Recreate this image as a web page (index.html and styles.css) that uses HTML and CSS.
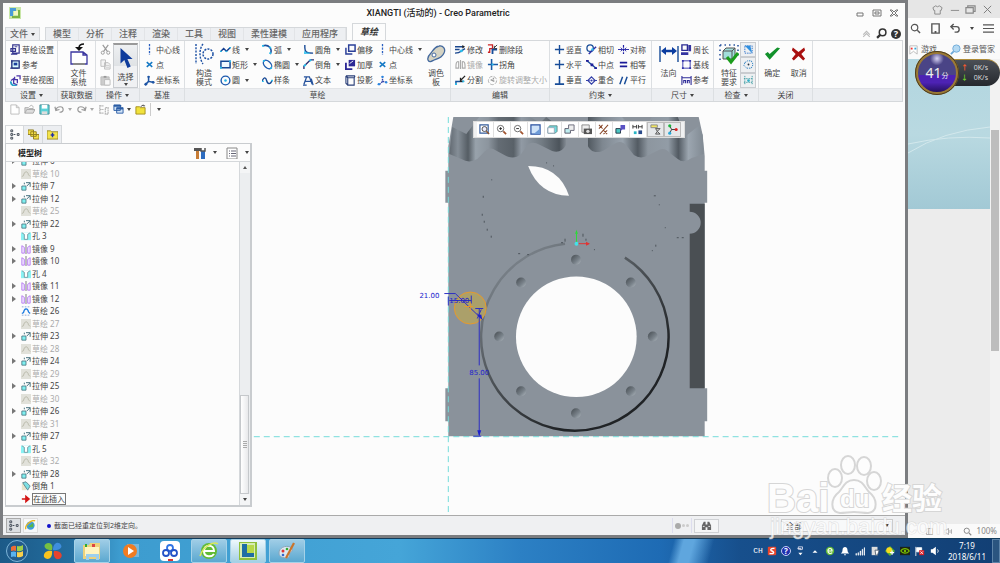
FILE: index.html
```html
<!DOCTYPE html>
<html lang="zh-CN">
<head>
<meta charset="utf-8">
<title>XIANGTI (活动的) - Creo Parametric</title>
<link rel="stylesheet" href="styles.css">
</head>
<body>
<svg class="defs" aria-hidden="true">
  <symbol id="i-setup" viewBox="0 0 12 12"><path d="M3 1h7v9H3zM1 5h5v3H1zM1 11h7" fill="#fff" stroke="#33348e" stroke-width="1.3"/><path d="M5 3h3" stroke="#33348e"/></symbol>
  <symbol id="i-ref" viewBox="0 0 12 12"><path d="M2 2h8v8H2z" fill="#dff" stroke="#22317e" stroke-width="1.5"/><path d="M4 4h4v3H4z" fill="#1c3f9c"/><path d="M0 10h9M2 1v3" stroke="#22317e"/></symbol>
  <symbol id="i-view" viewBox="0 0 12 12"><path d="M7 1h4v4M5 2v3h3v4M1 6l3-2v5l4 2" fill="none" stroke="#4b35a8" stroke-width="1.4"/><path d="M1 7a4 4 0 0 0 6 4" fill="none" stroke="#2aa0c8" stroke-width="2"/></symbol>
  <symbol id="i-file" viewBox="0 0 20 22"><path d="M2 9V21H18V12L14 9zM14 9v3h4" fill="#fff" stroke="#3a36a0" stroke-width="1.3"/><path d="M4 21h12" stroke="#888" stroke-width="2"/><path d="M6 4h8l-4 4z" fill="#111"/><path d="M10 5c0-3 2-4 5-4" fill="none" stroke="#111" stroke-width="1.6"/></symbol>
  <symbol id="i-cut" viewBox="0 0 12 12"><path d="M3 1l5 7M9 1L4 8" stroke="#999" stroke-width="1.3"/><circle cx="3" cy="9.500" r="1.700" fill="none" stroke="#999"/><circle cx="9" cy="9.500" r="1.700" fill="none" stroke="#999"/></symbol>
  <symbol id="i-copy" viewBox="0 0 12 12"><path d="M1 1h5v7H1zM5 4h4l2 2v5H5z" fill="#f4f4f4" stroke="#bbb"/><path d="M6 7h4M6 9h4" stroke="#ccc"/></symbol>
  <symbol id="i-paste" viewBox="0 0 12 12"><path d="M1 2h9v9H1z" fill="#ccc" stroke="#bbb"/><path d="M4 1h3v2H4z" fill="#999"/><path d="M5 5h6v6H5z" fill="#f8f8f8" stroke="#bbb"/></symbol>
  <symbol id="i-cursor" viewBox="0 0 14 20"><path d="M2 1v14l3.500-3.200L8.300 19l3-1.300-3-6.700H13z" fill="#0f3c9c"/></symbol>
  <symbol id="i-cline" viewBox="0 0 12 12"><path d="M6 0v12" stroke="#2a5fc0" stroke-width="1.400" stroke-dasharray="2.500 1.300"/></symbol>
  <symbol id="i-point" viewBox="0 0 12 12"><path d="M3 3.500l6 5M9 3.500l-6 5" stroke="#1478c4" stroke-width="1.700"/></symbol>
  <symbol id="i-csys" viewBox="0 0 12 12"><path d="M5 1v6l5 1M5 7l-4 4" fill="none" stroke="#1d54a4" stroke-width="1.700"/><circle cx="5" cy="2" r="1.300" fill="#1d54a4"/><circle cx="10" cy="8" r="1.500" fill="#1d54a4"/><circle cx="2" cy="10" r="1.500" fill="#1d54a4"/></symbol>
  <symbol id="i-csys2" viewBox="0 0 12 12"><path d="M6 1v6l5 1M6 7l-4 4" fill="none" stroke="#34a" stroke-dasharray="2 1" stroke-width="1.500"/><circle cx="6" cy="2" r="1.300" fill="#2a86e0"/><circle cx="10" cy="8" r="1.300" fill="#2a86e0"/><circle cx="2" cy="10" r="1.300" fill="#2a86e0"/></symbol>
  <symbol id="i-construct" viewBox="0 0 20 22"><path d="M2 1v20M9 1c-4 5-4 14 0 20" fill="none" stroke="#1c50a4" stroke-width="1.400" stroke-dasharray="2 1.300"/><circle cx="14" cy="11" r="5" fill="none" stroke="#1c50a4" stroke-width="1.500" stroke-dasharray="2 1.200"/></symbol>
  <symbol id="i-line" viewBox="0 0 12 12"><path d="M1 8l3-3 3 3 4-4" fill="none" stroke="#143f90" stroke-width="1.600"/><path d="M0 8h2M6 8h2M10 4h2" stroke="#28b4e4" stroke-width="1.500"/></symbol>
  <symbol id="i-rect" viewBox="0 0 12 12"><path d="M1 2.500h10v7H1z" fill="#eef8ff" stroke="#154794" stroke-width="1.600"/><path d="M0 9.500h2M10 2.500h2" stroke="#2ac0ee" stroke-width="2"/></symbol>
  <symbol id="i-circle" viewBox="0 0 12 12"><circle cx="6" cy="6" r="4.800" fill="none" stroke="#1a58ae" stroke-width="1.500"/><circle cx="6" cy="6" r="1.400" fill="#28b4e4"/></symbol>
  <symbol id="i-arc" viewBox="0 0 12 12"><path d="M1 2c6-2 11 3 8 9" fill="none" stroke="#1850a0" stroke-width="1.700"/><path d="M0 2h2M8 10h2M8 4h2" stroke="#2ac0ee" stroke-width="2"/></symbol>
  <symbol id="i-ellipse" viewBox="0 0 12 12"><ellipse cx="6" cy="6" rx="5.500" ry="3.500" transform="rotate(45 6 6)" fill="none" stroke="#1a58ae" stroke-width="1.400"/><path d="M1 2h2M9 10h2" stroke="#2ac0ee" stroke-width="2"/></symbol>
  <symbol id="i-spline" viewBox="0 0 12 12"><path d="M0 7c2-5 4-5 5-1s4 5 6 0" fill="none" stroke="#154794" stroke-width="1.500"/><path d="M0 7h2M10 6h2" stroke="#2ac0ee" stroke-width="1.500"/></symbol>
  <symbol id="i-fillet" viewBox="0 0 12 12"><path d="M2 1v3c0 5 2 6 9 6" fill="none" stroke="#154794" stroke-width="1.500"/><path d="M2 10h5M2 8v3" stroke="#2ac0ee" stroke-width="1.500"/></symbol>
  <symbol id="i-chamfer" viewBox="0 0 12 12"><path d="M1 11V8l7-7h4" fill="none" stroke="#2c2c70" stroke-width="1.500"/><path d="M1 8l2-2M7 2l2-1" stroke="#2ac0ee" stroke-width="2"/></symbol>
  <symbol id="i-text" viewBox="0 0 12 12"><path d="M1 10L4 2h3l3 8M3 7h5M1 2h4M9 4l2 7M0 11h4" fill="none" stroke="#26529c" stroke-width="1.400"/></symbol>
  <symbol id="i-offset" viewBox="0 0 12 12"><path d="M4 1h7v7H4zM1 4v7h7" fill="none" stroke="#2a3f98" stroke-width="1.600"/></symbol>
  <symbol id="i-thick" viewBox="0 0 12 12"><path d="M4 1h7v7H4z" fill="#2d2895"/><path d="M1 4v7h7" fill="none" stroke="#2d2895" stroke-width="2"/><path d="M5 5l4-3" stroke="#fff"/></symbol>
  <symbol id="i-project" viewBox="0 0 12 12"><path d="M3 3h7v8H3zM1 1l2 2M10 3l1-2M1 1v8l2 2M1 1h10" fill="none" stroke="#2a3f78" stroke-width="1.200"/></symbol>
  <symbol id="i-palette" viewBox="0 0 20 20"><path d="M2 16c-1-3 1-5 3-7s3-6 8-7c4-1 7 3 5 7-2 5-7 6-10 7-2 1-5 3-6 0z" fill="#d5d3c3" stroke="#44699e" stroke-width="1.300"/><circle cx="8" cy="11" r="2" fill="#fff" stroke="#44699e"/></symbol>
  <symbol id="i-modify" viewBox="0 0 12 12"><path d="M0 3h9M0 10c7 0 6-3 11-5M0 6h5" fill="none" stroke="#1a478e" stroke-width="1.500"/><path d="M8 1l3 2-3 2z" fill="#222"/><circle cx="7" cy="7.500" r="1.500" fill="#2ac0ee"/></symbol>
  <symbol id="i-mirror" viewBox="0 0 12 12"><path d="M6 1v10M4 3C1 2 1 6 1 10h3zM8 3c3-1 3 3 3 7H8z" fill="none" stroke="#aaa" stroke-width="1.200"/></symbol>
  <symbol id="i-divide" viewBox="0 0 12 12"><path d="M1 11V7h8" fill="none" stroke="#17549c" stroke-width="1.600"/><path d="M6 6l5-5M6 3v4h4" stroke="#222" stroke-width="1.400" fill="none"/><path d="M0 10h2M8 7h2" stroke="#2ac0ee" stroke-width="2"/></symbol>
  <symbol id="i-delseg" viewBox="0 0 12 12"><path d="M1 1h5v4H3v4H1" fill="none" stroke="#cc2222" stroke-width="1.400"/><path d="M6 11V6h5" fill="none" stroke="#174c98" stroke-width="2"/><path d="M7 5l4-4M8 2v3h3" stroke="#333" fill="none"/></symbol>
  <symbol id="i-corner" viewBox="0 0 12 12"><path d="M5 0v12M1 6h11" stroke="#1a59a4" stroke-width="1.700"/><path d="M5 6h2" stroke="#2ac0ee" stroke-width="2"/></symbol>
  <symbol id="i-rotate" viewBox="0 0 12 12"><circle cx="6" cy="6" r="4.500" fill="none" stroke="#aaa" stroke-dasharray="4 1.500"/><path d="M4 5l4 2M7 3v2" stroke="#999" stroke-width="1.500"/></symbol>
  <symbol id="i-plus" viewBox="0 0 12 12"><path d="M6 1v10M1 6h10" stroke="#174c98" stroke-width="1.500"/></symbol>
  <symbol id="i-perp" viewBox="0 0 12 12"><path d="M6 1v9M1 10h10" stroke="#174c98" stroke-width="1.800"/></symbol>
  <symbol id="i-tangent" viewBox="0 0 12 12"><circle cx="4.500" cy="4.500" r="3.500" fill="none" stroke="#174c98" stroke-width="1.400"/><path d="M3 11l8-8" stroke="#2c2fa4" stroke-width="1.600"/><circle cx="7" cy="6" r="1.300" fill="#2ac0ee"/></symbol>
  <symbol id="i-mid" viewBox="0 0 12 12"><path d="M1 2l10 8" stroke="#174c98" stroke-width="1.500"/><path d="M0 1h3v2H0zM5 5h3v3H5zM9 9h3v2H9z" fill="#20209a"/></symbol>
  <symbol id="i-coin" viewBox="0 0 12 12"><path d="M6 2l4 4-4 4-4-4zM0 6h4M8 6h4" fill="none" stroke="#3440a8" stroke-width="1.300"/><circle cx="6" cy="6" r="1.200" fill="#3440a8"/></symbol>
  <symbol id="i-sym" viewBox="0 0 12 12"><path d="M6 1v10" stroke="#2020a4" stroke-width="1.300" stroke-dasharray="3 1"/><path d="M0 6h5M7 6h5M3 4l2 2-2 2M9 4L7 6l2 2" fill="none" stroke="#2020a4"/></symbol>
  <symbol id="i-equal" viewBox="0 0 12 12"><path d="M2 4h8M2 8h8" stroke="#1a1a98" stroke-width="2"/></symbol>
  <symbol id="i-par" viewBox="0 0 12 12"><path d="M2 10l3-8M7 10l3-8" stroke="#174c98" stroke-width="1.600"/></symbol>
  <symbol id="i-dim" viewBox="0 0 20 22"><path d="M1 3v16M19 3v16" stroke="#174c98" stroke-width="1.400"/><path d="M4 8h12" stroke="#0b3da0" stroke-width="2.500"/><path d="M2 8l5-4v8zM18 8l-5-4v8z" fill="#0b3da0"/></symbol>
  <symbol id="i-perim" viewBox="0 0 12 12"><path d="M1 1h6v6H1z" fill="none" stroke="#2a2a92" stroke-width="1.500"/><path d="M8 1h3v7H8zM0 9h8v3H0z" fill="#3434a0"/></symbol>
  <symbol id="i-base" viewBox="0 0 12 12"><path d="M2 2h8v8H2z" fill="none" stroke="#33a"/><path d="M1 1h2v2H1zM9 1h2v2H9zM1 9h2v2H1zM9 9h2v2H9z" fill="#33a"/></symbol>
  <symbol id="i-refd" viewBox="0 0 12 12"><path d="M1 1v10M11 1v10M1 3h10M3 9V6h2v3M7 9V6h2v3" fill="none" stroke="#2f2c98" stroke-width="1.200"/></symbol>
  <symbol id="i-feat" viewBox="0 0 20 22"><path d="M1 2h18M1 2v17M19 2v12" fill="none" stroke="#2b55a0" stroke-width="1.600" stroke-dasharray="1.500 3"/><path d="M4 8l3-3h9v8l-3 3H4z" fill="#a3dedc" stroke="#555"/><path d="M4 8h9v8M13 8l3-3" fill="none" stroke="#555"/><path d="M8 14l4 5 7-9" fill="none" stroke="#1b9c1b" stroke-width="3"/></symbol>
  <symbol id="i-shade" viewBox="0 0 12 12"><path d="M2 2h8v8H2z" fill="none" stroke="#2a6fc8" stroke-dasharray="1.500 1"/><path d="M2 2h6l2 8z" fill="#2f8fe0"/></symbol>
  <symbol id="i-open" viewBox="0 0 12 12"><path d="M2 4l3-2h4l2 4-2 4H4L1 7z" fill="none" stroke="#267cc0" stroke-dasharray="1.500 1"/><circle cx="6" cy="6" r="1" fill="#234"/></symbol>
  <symbol id="i-over" viewBox="0 0 12 12"><path d="M2 1v10M10 1v10M1 4h10M1 8h10" stroke="#3a9aa0" stroke-dasharray="1.500 1"/><circle cx="6" cy="6" r="1.500" fill="#33b0c8"/></symbol>
  <symbol id="i-ok" viewBox="0 0 18 16"><path d="M1 8l5 6L17 2l-3-1-8 7-2-2z" fill="#12912b"/></symbol>
  <symbol id="i-no" viewBox="0 0 18 16"><path d="M3 1l6 5 6-5 1 3-4 4 4 5-2 2-5-5-5 5-2-2 4-5-4-4z" fill="#a80f0f"/></symbol>
  <symbol id="i-new" viewBox="0 0 12 12"><path d="M2 1h6l3 3v7H2zM8 1v3h3" fill="#fff" stroke="#bbb"/></symbol>
  <symbol id="i-folder" viewBox="0 0 12 12"><path d="M1 10V4h4l1 1h4v2M1 10l2-4h9l-2 4z" fill="#ddd" stroke="#aaa"/><path d="M6 3c2-3 4-1 4 1" fill="none" stroke="#aaa"/></symbol>
  <symbol id="i-save" viewBox="0 0 12 12"><path d="M1 1h10v10H1z" fill="#5bd2d8" stroke="#4a8a94"/><path d="M3 1h6v4H3z" fill="#fff"/><path d="M3 8h6v3H3z" fill="#ddd"/></symbol>
  <symbol id="i-undo" viewBox="0 0 12 12"><path d="M2 6c2-4 8-4 8 0 0 2-2 3-4 3M1 3l1 4 4-1" fill="none" stroke="#999" stroke-width="1.300"/></symbol>
  <symbol id="i-redo" viewBox="0 0 12 12"><path d="M10 6C8 2 2 2 2 6c0 2 2 3 4 3M11 3l-1 4-4-1" fill="none" stroke="#999" stroke-width="1.300"/></symbol>
  <symbol id="i-regen" viewBox="0 0 12 12"><path d="M2 1v10M2 2h4M2 6h4M2 10h4M8 4h3v7H8z" fill="none" stroke="#b5b5b5" stroke-width="1.300" stroke-dasharray="2 .5"/></symbol>
  <symbol id="i-wins" viewBox="0 0 12 12"><path d="M1 1h7v6H1zM4 4h7v6H4z" fill="#cfe2f6" stroke="#2a5ca4"/><path d="M1 2h8M4 5h7" stroke="#2a5ca4" stroke-width="2"/></symbol>
  <symbol id="i-yfold" viewBox="0 0 12 12"><path d="M1 3h4l1 1h5v7H1z" fill="#f1e23c" stroke="#a48e1a"/><path d="M6 3l3-2v1h2" stroke="#444" fill="none"/></symbol>
  <symbol id="i-tree" viewBox="0 0 12 12"><path d="M2 1h2v2H2zM2 5h2v2H2zM2 9h2v2H2zM9 5h2v2H9zM5 6h2" fill="#fff" stroke="#3b4450"/></symbol>
  <symbol id="i-folders" viewBox="0 0 12 12"><path d="M0 1h6v5H0zM3 3h6v5H3zM6 6h6v5H6z" fill="#f6e14a" stroke="#8f7c1e"/></symbol>
  <symbol id="i-fav" viewBox="0 0 12 12"><path d="M0 2h4l1 1h7v8H0z" fill="#f3e44c" stroke="#9a8826"/><path d="M6 4v5M4 6.500h4" stroke="#2230a8" stroke-width="1.500"/></symbol>
  <symbol id="i-tools" viewBox="0 0 12 12"><path d="M0 1h7v3H0z" fill="#555"/><path d="M2 4h3v8H2z" fill="#c77c35"/><path d="M7 4h4v8H7z" fill="#2d6cc0"/><path d="M7 1v3h4V1" fill="none" stroke="#555" stroke-width="1.500"/></symbol>
  <symbol id="i-list" viewBox="0 0 12 12"><path d="M1 1h10v11H1z" fill="#fff" stroke="#888"/><path d="M3 4h1M3 6.500h1M3 9h1M5 4h5M5 6.500h5M5 9h5" stroke="#667"/></symbol>
  <symbol id="i-ext" viewBox="0 0 12 12"><path d="M1 6h5v5H1z" fill="#7ff0f0" stroke="#4a7480"/><path d="M4 4V2M6 2h5v5M11 2L7 6" fill="none" stroke="#4a7480" stroke-width="1.200"/></symbol>
  <symbol id="i-skg" viewBox="0 0 12 12"><path d="M0 0h12v12H0z" fill="#e1e1da"/><path d="M1 9l2-1c1-6 5-6 6-1l2 2" fill="none" stroke="#b3b3a4"/></symbol>
  <symbol id="i-sk" viewBox="0 0 12 12"><path d="M1 1h10M1 11h10" stroke="#7a9ad0" stroke-dasharray="2 1.500"/><path d="M1 9l2-1c1-6 5-6 6-1l2 2" fill="none" stroke="#1b7be0" stroke-width="1.500"/></symbol>
  <symbol id="i-hole" viewBox="0 0 12 12"><path d="M0 2h12v9H0z" fill="#8af2f4"/><path d="M1 2l3 2v6h4V4l3-2" fill="#fff" stroke="#6c8f98"/></symbol>
  <symbol id="i-mir" viewBox="0 0 12 12"><path d="M6 0v12" stroke="#999" stroke-width="1.500"/><path d="M1 11V2l3 2v7zM11 11V2L8 4v7z" fill="#f2e8ff" stroke="#b070f0"/></symbol>
  <symbol id="i-cham" viewBox="0 0 12 12"><path d="M1 3h5v8H1z" fill="#e8e4cc"/><path d="M2 2l4-1 5 5-3 5z" fill="#7ce0e4" stroke="#5a7c84"/></symbol>
  <symbol id="i-insert" viewBox="0 0 12 12"><path d="M1 5h4V1l6 5-6 5V7H1z" fill="#d31515"/></symbol>
  <symbol id="i-zfit" viewBox="0 0 12 12"><path d="M1 1h9v9H1z" fill="none" stroke="#345c9c" stroke-width="1.300"/><circle cx="6" cy="5.500" r="2.700" fill="#eef" stroke="#444"/><path d="M8 8l3 3" stroke="#8a5430" stroke-width="1.600"/></symbol>
  <symbol id="i-zin" viewBox="0 0 12 12"><circle cx="5" cy="5" r="3.500" fill="#fff" stroke="#666"/><path d="M3.500 5h3M5 3.500v3" stroke="#222"/><path d="M8 8l3 3" stroke="#a0522d" stroke-width="1.800"/></symbol>
  <symbol id="i-zout" viewBox="0 0 12 12"><circle cx="5" cy="5" r="3.500" fill="#fff" stroke="#666"/><path d="M3.500 5h3" stroke="#222"/><path d="M8 8l3 3" stroke="#a0522d" stroke-width="1.800"/></symbol>
  <symbol id="i-repaint" viewBox="0 0 12 12"><path d="M1 1h10v10H1z" fill="#cfe3f8" stroke="#2850a0" stroke-width="1.300"/><path d="M4 11l7-6v6z" fill="#6f9cd8"/></symbol>
  <symbol id="i-box" viewBox="0 0 12 12"><path d="M1 4l2-2h8v6l-2 2H1z" fill="#6fdde0" stroke="#688"/><path d="M1 4h7v6H1z" fill="#fff" stroke="#9ab"/></symbol>
  <symbol id="i-orient" viewBox="0 0 12 12"><path d="M1 5h6v5H1z" fill="#bfeef0" stroke="#556"/><path d="M5 5V1h6v6H7" fill="#eee" stroke="#667"/></symbol>
  <symbol id="i-cam" viewBox="0 0 12 12"><path d="M1 1h8v8H1z" fill="#eee" stroke="#888"/><path d="M3 5h9v6H3z" fill="#555"/><circle cx="7.500" cy="8" r="1.800" fill="#ddd"/></symbol>
  <symbol id="i-datum" viewBox="0 0 12 12"><path d="M1 1l4 4M5 1L1 5M2 11l9-10M6 7l4 4M10 7l-4 4" stroke="#8a4a2c" stroke-width="1.100"/></symbol>
  <symbol id="i-annot" viewBox="0 0 12 12"><path d="M1 5h5v5H1z" fill="#4bc8c4" stroke="#234"/><path d="M6 1h5v5H8l-2 2z" fill="#5a52c4"/></symbol>
  <symbol id="i-disp" viewBox="0 0 12 12"><path d="M1 1v4M5 1v4M1 3h4M7 1v4M11 1v4M7 3h4" stroke="#333"/><path d="M2 8h3v3H2z" fill="#28b4c4"/><path d="M7 7h4v4H7z" fill="#2a4a8a"/></symbol>
  <symbol id="i-dimv" viewBox="0 0 12 12"><path d="M1 1h7v3H1z" fill="#f2e560" stroke="#888"/><path d="M6 5h5L8 8l3 3H6l2-3z" fill="#ccc" stroke="#555"/></symbol>
  <symbol id="i-spin" viewBox="0 0 12 12"><path d="M3 2l2 4-2 4M5 6h5" fill="none" stroke="#333"/><circle cx="3" cy="2" r="1.700" fill="#19b13a"/><circle cx="10" cy="6" r="1.700" fill="#d22"/><circle cx="3" cy="10" r="1.700" fill="#28a8d8"/></symbol>
  <symbol id="i-bino" viewBox="0 0 12 12"><path d="M1 11V6l2-4h2v9zM7 11V2h2l2 4v5zM5 5h2v3H5z" fill="#666"/><path d="M2 7h2M8 7h2" stroke="#eee"/></symbol>
  <symbol id="i-search" viewBox="0 0 12 12"><circle cx="5" cy="5" r="3.500" fill="none" stroke="currentColor" stroke-width="1.300"/><path d="M8 8l3 3" stroke="currentColor" stroke-width="1.500"/></symbol>
</svg>

<div class="desk">
<main class="creo">
  <header class="titlebar">
    <svg class="logo" viewBox="0 0 12 12"><path d="M0 0h12v12H0z" fill="#c9e6a8"/><path d="M1 1h6v3H4v5H1z" fill="#4a9cd8"/><path d="M5 4h4v4H5z" fill="#f4f8c0"/><path d="M9 3h2v8H3V9h6z" fill="#7cb342"/></svg>
    <h1>XIANGTI (活动的) - Creo Parametric</h1>
    <div class="winbtns">
      <button aria-label="最小化"><svg viewBox="0 0 10 10"><path d="M2 5h6v3H2z" fill="none" stroke="#777"/></svg></button>
      <button aria-label="最大化"><svg viewBox="0 0 10 10"><path d="M1 2h8v6H1zM3 4h4v2H3z" fill="none" stroke="#777"/></svg></button>
      <button aria-label="关闭"><svg viewBox="0 0 10 10"><path d="M1 2h2l2 2 2-2h2L6 5l3 3H7L5 6 3 8H1l3-3z" fill="none" stroke="#777"/></svg></button>
    </div>
  </header>

  <nav class="tabs">
    <button class="filetab">文件 <i class="dn"></i></button>
    <div class="tabset"><button>模型</button><button>分析</button><button>注释</button><button>渲染</button><button>工具</button><button>视图</button><button class="wide">柔性建模</button><button class="wide">应用程序</button></div>
    <button class="tab-on">草绘</button>
    <div class="help">
      <svg viewBox="0 0 10 10"><path d="M2 6l3-3 3 3M2 8l3-3 3 3" fill="none" stroke="#bbb"/></svg>
      <svg viewBox="0 0 10 10"><circle cx="6" cy="4" r="3" fill="none" stroke="#333" stroke-width="1.400"/><path d="M4 6L1 9" stroke="#333" stroke-width="2"/></svg>
      <span class="qm">?</span>
    </div>
  </nav>

  <section class="ribbon">
    <div class="grp g-set"><div class="body"><div class="col">
      <button class="it"><svg><use href="#i-setup"/></svg>草绘设置</button>
      <button class="it"><svg><use href="#i-ref"/></svg>参考</button>
      <button class="it"><svg><use href="#i-view"/></svg>草绘视图</button></div></div>
      <div class="cap">设置 <i class="dn"></i></div></div>
    <div class="grp g-get"><div class="body"><button class="big"><svg><use href="#i-file"/></svg><span>文件<br>系统</span></button></div><div class="cap">获取数据</div></div>
    <div class="grp g-op"><div class="body"><div class="col">
      <button class="it" aria-label="剪切"><svg><use href="#i-cut"/></svg></button>
      <button class="it" aria-label="复制"><svg><use href="#i-copy"/></svg></button>
      <button class="it" aria-label="粘贴"><svg><use href="#i-paste"/></svg></button></div>
      <button class="big sel"><svg><use href="#i-cursor"/></svg><span>选择</span><i class="dn"></i></button></div>
      <div class="cap">操作 <i class="dn"></i></div></div>
    <div class="grp g-dat"><div class="body"><div class="col">
      <button class="it"><svg><use href="#i-cline"/></svg>中心线</button>
      <button class="it"><svg><use href="#i-point"/></svg>点</button>
      <button class="it"><svg><use href="#i-csys"/></svg>坐标系</button></div></div>
      <div class="cap">基准</div></div>
    <div class="grp g-sk"><div class="body">
      <button class="big"><svg><use href="#i-construct"/></svg><span>构造<br>模式</span></button>
      <div class="col">
      <button class="it"><svg><use href="#i-line"/></svg>线<i class="dn"></i></button>
      <button class="it"><svg><use href="#i-rect"/></svg>矩形<i class="dn"></i></button>
      <button class="it"><svg><use href="#i-circle"/></svg>圆<i class="dn"></i></button></div>
      <div class="col">
      <button class="it"><svg><use href="#i-arc"/></svg>弧<i class="dn"></i></button>
      <button class="it"><svg><use href="#i-ellipse"/></svg>椭圆<i class="dn"></i></button>
      <button class="it"><svg><use href="#i-spline"/></svg>样条</button></div>
      <div class="col">
      <button class="it"><svg><use href="#i-fillet"/></svg>圆角<i class="dn"></i></button>
      <button class="it"><svg><use href="#i-chamfer"/></svg>倒角<i class="dn"></i></button>
      <button class="it"><svg><use href="#i-text"/></svg>文本</button></div>
      <div class="col">
      <button class="it"><svg><use href="#i-offset"/></svg>偏移</button>
      <button class="it"><svg><use href="#i-thick"/></svg>加厚</button>
      <button class="it"><svg><use href="#i-project"/></svg>投影</button></div>
      <div class="col">
      <button class="it"><svg><use href="#i-cline"/></svg>中心线<i class="dn"></i></button>
      <button class="it"><svg><use href="#i-point"/></svg>点</button>
      <button class="it"><svg><use href="#i-csys2"/></svg>坐标系</button></div>
      <button class="big"><svg><use href="#i-palette"/></svg><span>调色<br>板</span></button></div>
      <div class="cap">草绘</div></div>
    <div class="grp g-ed"><div class="body"><div class="col">
      <button class="it"><svg><use href="#i-modify"/></svg>修改</button>
      <button class="it off"><svg><use href="#i-mirror"/></svg>镜像</button>
      <button class="it"><svg><use href="#i-divide"/></svg>分割</button></div>
      <div class="col">
      <button class="it"><svg><use href="#i-delseg"/></svg>删除段</button>
      <button class="it"><svg><use href="#i-corner"/></svg>拐角</button>
      <button class="it off"><svg><use href="#i-rotate"/></svg>旋转调整大小</button></div></div>
      <div class="cap">编辑</div></div>
    <div class="grp g-con"><div class="body"><div class="col">
      <button class="it"><svg><use href="#i-plus"/></svg>竖直</button>
      <button class="it"><svg><use href="#i-plus"/></svg>水平</button>
      <button class="it"><svg><use href="#i-perp"/></svg>垂直</button></div>
      <div class="col">
      <button class="it"><svg><use href="#i-tangent"/></svg>相切</button>
      <button class="it"><svg><use href="#i-mid"/></svg>中点</button>
      <button class="it"><svg><use href="#i-coin"/></svg>重合</button></div>
      <div class="col">
      <button class="it"><svg><use href="#i-sym"/></svg>对称</button>
      <button class="it"><svg><use href="#i-equal"/></svg>相等</button>
      <button class="it"><svg><use href="#i-par"/></svg>平行</button></div></div>
      <div class="cap">约束 <i class="dn"></i></div></div>
    <div class="grp g-dim"><div class="body">
      <button class="big"><svg><use href="#i-dim"/></svg><span>法向</span></button>
      <div class="col">
      <button class="it"><svg><use href="#i-perim"/></svg>周长</button>
      <button class="it"><svg><use href="#i-base"/></svg>基线</button>
      <button class="it"><svg><use href="#i-refd"/></svg>参考</button></div></div>
      <div class="cap">尺寸 <i class="dn"></i></div></div>
    <div class="grp g-chk"><div class="body">
      <button class="big"><svg><use href="#i-feat"/></svg><span>特征<br>要求</span></button>
      <div class="col press">
      <button class="it" aria-label="着色封闭环"><svg><use href="#i-shade"/></svg></button>
      <button class="it" aria-label="突出显示开放端"><svg><use href="#i-open"/></svg></button>
      <button class="it" aria-label="重叠几何"><svg><use href="#i-over"/></svg></button></div></div>
      <div class="cap">检查 <i class="dn"></i></div></div>
    <div class="grp g-cl"><div class="body">
      <button class="big"><svg><use href="#i-ok"/></svg><span>确定</span></button>
      <button class="big"><svg><use href="#i-no"/></svg><span>取消</span></button></div>
      <div class="cap">关闭</div></div>
    <div class="grp rest"><div class="body"></div><div class="cap"></div></div>
  </section>

  <div class="quick">
    <button aria-label="新建"><svg><use href="#i-new"/></svg></button>
    <button aria-label="打开"><svg><use href="#i-folder"/></svg></button>
    <button aria-label="保存"><svg><use href="#i-save"/></svg></button>
    <button aria-label="撤消"><svg><use href="#i-undo"/></svg><i class="dn pale"></i></button>
    <button aria-label="重做"><svg><use href="#i-redo"/></svg><i class="dn pale"></i></button>
    <button aria-label="重新生成"><svg><use href="#i-regen"/></svg></button>
    <button aria-label="窗口"><svg><use href="#i-wins"/></svg><i class="dn"></i></button>
    <button aria-label="关闭窗口"><svg><use href="#i-yfold"/></svg></button>
    <button class="more" aria-label="自定义"><i class="dn"></i></button>
  </div>

  <div class="work">
    <aside class="side">
      <div class="sidetabs"><button class="on" aria-label="模型树"><svg><use href="#i-tree"/></svg></button><button aria-label="文件夹浏览器"><svg><use href="#i-folders"/></svg></button><button aria-label="收藏夹"><svg><use href="#i-fav"/></svg></button></div>
      <div class="panel">
        <div class="phead"><b>模型树</b><button aria-label="设置"><svg><use href="#i-tools"/></svg><i class="dn"></i></button><button aria-label="显示"><svg><use href="#i-list"/></svg><i class="dn"></i></button></div>
        <div class="treewrap">
          <div class="treeclip"><ul class="tree">
            <li class="ex"><svg><use href="#i-ext"/></svg>拉伸 6</li>
            <li class="off"><svg><use href="#i-skg"/></svg>草绘 10</li>
            <li class="ex"><svg><use href="#i-ext"/></svg>拉伸 7</li>
            <li class="ex"><svg><use href="#i-ext"/></svg>拉伸 12</li>
            <li class="off"><svg><use href="#i-skg"/></svg>草绘 25</li>
            <li class="ex"><svg><use href="#i-ext"/></svg>拉伸 22</li>
            <li><svg><use href="#i-hole"/></svg>孔 3</li>
            <li class="ex"><svg><use href="#i-mir"/></svg>镜像 9</li>
            <li class="ex"><svg><use href="#i-mir"/></svg>镜像 10</li>
            <li><svg><use href="#i-hole"/></svg>孔 4</li>
            <li class="ex"><svg><use href="#i-mir"/></svg>镜像 11</li>
            <li class="ex"><svg><use href="#i-mir"/></svg>镜像 12</li>
            <li><svg><use href="#i-sk"/></svg>草绘 26</li>
            <li class="off"><svg><use href="#i-skg"/></svg>草绘 27</li>
            <li class="ex"><svg><use href="#i-ext"/></svg>拉伸 23</li>
            <li class="off"><svg><use href="#i-skg"/></svg>草绘 28</li>
            <li class="ex"><svg><use href="#i-ext"/></svg>拉伸 24</li>
            <li class="off"><svg><use href="#i-skg"/></svg>草绘 29</li>
            <li class="ex"><svg><use href="#i-ext"/></svg>拉伸 25</li>
            <li class="off"><svg><use href="#i-skg"/></svg>草绘 30</li>
            <li class="ex"><svg><use href="#i-ext"/></svg>拉伸 26</li>
            <li class="off"><svg><use href="#i-skg"/></svg>草绘 31</li>
            <li class="ex"><svg><use href="#i-ext"/></svg>拉伸 27</li>
            <li><svg><use href="#i-hole"/></svg>孔 5</li>
            <li class="off"><svg><use href="#i-skg"/></svg>草绘 32</li>
            <li class="ex"><svg><use href="#i-ext"/></svg>拉伸 28</li>
            <li><svg><use href="#i-cham"/></svg>倒角 1</li>
            <li><svg><use href="#i-insert"/></svg><span class="boxed">在此插入</span></li>
          </ul></div>
          <div class="sbar"><button class="up" aria-label="向上滚动"></button><div class="track"><div class="thumb"></div></div><button aria-label="向下滚动"><i class="dn"></i></button></div>
        </div>
      </div>
    </aside>

    <section class="view">
      <svg class="model" viewBox="252 117 653 399" preserveAspectRatio="xMidYMid meet">
        <defs>
          <linearGradient id="teeth" gradientUnits="userSpaceOnUse" x1="450" x2="704" y1="0" y2="0">
            <stop offset="0" stop-color="#666e76"/><stop offset=".03" stop-color="#858e97"/><stop offset=".07" stop-color="#555d64"/><stop offset=".1" stop-color="#98a2ab"/><stop offset=".15" stop-color="#8c959e"/><stop offset=".19" stop-color="#646c74"/><stop offset=".25" stop-color="#596168"/><stop offset=".28" stop-color="#919aa4"/><stop offset=".36" stop-color="#737c84"/><stop offset=".43" stop-color="#4c545b"/><stop offset=".46" stop-color="#8a929b"/><stop offset=".52" stop-color="#8a929b"/><stop offset=".54" stop-color="#4e565d"/><stop offset=".6" stop-color="#7e8790"/><stop offset=".68" stop-color="#98a2ac"/><stop offset=".74" stop-color="#535b63"/><stop offset=".78" stop-color="#8d969f"/><stop offset=".86" stop-color="#929ca6"/><stop offset=".9" stop-color="#525a62"/><stop offset=".94" stop-color="#9ca6b0"/><stop offset="1" stop-color="#818a93"/>
          </linearGradient>
          <linearGradient id="groove" gradientUnits="userSpaceOnUse" x1="495" y1="265" x2="600" y2="400"><stop offset="0" stop-color="#7d858d"/><stop offset=".45" stop-color="#555b60"/><stop offset="1" stop-color="#202326"/></linearGradient>
          <linearGradient id="bolt" x1="0" y1="0" x2="1" y2="1"><stop offset=".2" stop-color="#565d63"/><stop offset=".6" stop-color="#79828a"/><stop offset="1" stop-color="#b0b8bf"/></linearGradient>
        </defs>
        <path d="M453 117H699L703 135 705 156V171H707.500V203H705V389H707.500V422H705V437H448V422H445V389H448V203H445V171H448V146z" fill="#8a929b"/>
        <path d="M452 127l14 7 13-17H530L540 123 546 117H588l-1 27C590 152 597 155 606 149L616 143Q622 140 627 146L634 155Q641 160 649 155L659 150Q665 147 670 153L678 159Q684 164 692 158L704 154 703 135 699 126 686 136 678 117H652L640 134 622 117H588V145H566Q561 154 552 151L540 145Q530 140 526 147L521 154Q514 160 506 156L493 149Q488 147 482 154L477 159Q469 164 461 159L449 154z" fill="url(#teeth)"/>
        <path d="M546 117H588V146H566V132z" fill="#8a929b"/>
        <path d="M690 204H705V389H690V234a11 11 0 0 0 0-22z" fill="#4a4f53"/>
        <path d="M528 166Q559 166 569 196 539 195 528 166z" fill="#fcfcfc"/>
        <path d="M625 258A94 94 0 1 1 565 244" fill="none" stroke="url(#groove)" stroke-width="2.500"/>
        <circle cx="576.300" cy="337.300" r="60.500" fill="#fcfcfc"/>
        <g fill="url(#bolt)"><circle cx="576" cy="260" r="5"/><circle cx="631" cy="283" r="5"/><circle cx="653" cy="337" r="5"/><circle cx="631" cy="392" r="5"/><circle cx="576" cy="414" r="5"/><circle cx="521" cy="392" r="5"/><circle cx="499" cy="337" r="5"/><circle cx="521" cy="283" r="5"/></g>
        <path d="M483 196v2M482 214v2M484 221v2M487 229v2M491 236v2M518 254h2M527 255h2M561 243h2M565 239v3M583 234v3M586 239v2M594 250h1M654 196h2M659 205h1M665 228h1M677 238h2M682 238h2M656 245v2M652 251h1M546 163h1M553 166h1M491 180h1" stroke="#4d545b"/>
        <path d="M448 117V516M253 437.500H900" fill="none" stroke="#74dcda" stroke-dasharray="6 4"/>
        <circle cx="470" cy="308.500" r="16" fill="#aba06a" stroke="#e79a2c"/>
        <path d="M444 294h11l26 25M448 297v9M471 296v8M449 301h22M475 309h8M479 309v57M479 379v57M473 437h8M477 314l5 6M481 310l-4 9" fill="none" stroke="#2d2fc4"/>
        <path d="M477 431h4l-2 6zM477 316l5 4-1-5z" fill="#1d1fd0"/>
        <path d="M464 307h9M470 303v9" stroke="#e79a2c"/>
        <g class="dimtext"><text x="419" y="298">21.00</text><text x="449" y="303">15.00</text><text x="469" y="376">85.00</text></g>
        <path d="M576.500 243V232" stroke="#2fd83a"/><path d="M577 244h12" stroke="#e03434"/><path d="M575 234l1.500-4 1.500 4z" fill="#2fd83a"/><path d="M586 242l4 2-4 2z" fill="#e03434"/><circle cx="576.500" cy="244" r="2" fill="#45e0e8"/>
      </svg>
      <div class="vtools">
        <button aria-label="重新调整"><svg><use href="#i-zfit"/></svg></button><button aria-label="放大"><svg><use href="#i-zin"/></svg></button><button aria-label="缩小"><svg><use href="#i-zout"/></svg></button><button aria-label="重画"><svg><use href="#i-repaint"/></svg></button><button aria-label="显示样式"><svg><use href="#i-box"/></svg></button><button aria-label="视图方向"><svg><use href="#i-orient"/></svg></button><button aria-label="视图管理器"><svg><use href="#i-cam"/></svg></button><button aria-label="基准显示"><svg><use href="#i-datum"/></svg></button><button aria-label="注释显示"><svg><use href="#i-annot"/></svg></button><button aria-label="草绘显示"><svg><use href="#i-disp"/></svg></button><button class="on" aria-label="尺寸显示"><svg><use href="#i-dimv"/></svg></button><button class="on" aria-label="旋转中心"><svg><use href="#i-spin"/></svg></button>
      </div>
    </section>
  </div>

  <footer class="status">
    <button class="sq on" aria-label="导航器"><svg><use href="#i-tree"/></svg></button>
    <button class="sq" aria-label="浏览器"><svg viewBox="0 0 12 12"><circle cx="6" cy="6" r="4.500" fill="#3d9be0"/><path d="M3 8l6-5v5z" fill="#58b848"/><path d="M1 10C-1 6 8-1 11 1" fill="none" stroke="#e8b820" stroke-width="1.500"/></svg></button>
    <span class="msg"><i></i>截面已经重定位到2维定向。</span>
    <span class="dots"><i></i><i></i><i></i></span>
    <button class="find" aria-label="查找"><svg><use href="#i-bino"/></svg></button>
    <label class="filter"><select aria-label="选择过滤器"><option>全部</option></select><i class="dn"></i></label>
  </footer>
</main>

<aside class="browser">
  <div class="btop"><svg viewBox="0 0 12 12"><path d="M4 2l-3 2 1 3h1v4h6V7h1l1-3-3-2Q6 4 4 2z" fill="none" stroke="#888"/></svg><svg viewBox="0 0 12 12"><path d="M2 7h9" stroke="#888"/></svg><svg viewBox="0 0 12 12"><path d="M1 4h8v6H1zM3 4V2h8v6H9" fill="none" stroke="#888" stroke-width="1.300"/></svg><svg viewBox="0 0 12 12"><path d="M2 2l8 8M10 2l-8 8" stroke="#777"/></svg></div>
  <div class="bnav"><svg class="s"><use href="#i-search"/></svg><svg viewBox="0 0 12 12"><path d="M2 1h8v10H2zM5 9.500h2" fill="none" stroke="#555" stroke-width="1.500"/></svg><svg viewBox="0 0 12 12"><path d="M2 4h5a3 3 0 0 1 0 6H5M4 1L1 4l3 3" fill="none" stroke="#555" stroke-width="1.500"/></svg><i class="dn"></i><svg viewBox="0 0 12 12"><path d="M0 2h12M0 6h12M0 10h12" stroke="#555" stroke-width="1.300"/></svg></div>
  <div class="bmarks"><svg viewBox="0 0 12 12"><path d="M2 2h8v9L6 8l-4 3z" fill="#fff" stroke="#bbb"/><path d="M3 5h2" stroke="#e33" stroke-width="2"/><path d="M7 5h2" stroke="#3ad" stroke-width="2"/></svg><a href="#">游戏</a><svg viewBox="0 0 12 12"><circle cx="7" cy="5" r="4" fill="#b4d9f2" stroke="#6ba8d8"/><path d="M4 8l-3 3" stroke="#6ba8d8" stroke-width="2"/></svg><a href="#">登录管家</a></div>
  <div class="page">
    <svg class="sky" viewBox="0 0 82 150" preserveAspectRatio="none"><defs><linearGradient id="sky" x1="0" y1="0" x2="0" y2="1"><stop offset="0" stop-color="#b2d6e0"/><stop offset=".5" stop-color="#b9d9e1"/><stop offset="1" stop-color="#a2c9d5"/></linearGradient></defs><path d="M0 0h82v150H0z" fill="url(#sky)"/><path d="M0 94Q35 72 82 68M0 85Q40 76 82 79" fill="none" stroke="#d3e8ec"/></svg>
    <div class="pscroll"><i></i></div>
  </div>
  <div class="bfoot"><svg viewBox="0 0 12 12"><path d="M2 2h8v8H2zM5 2v8" fill="none" stroke="#999"/></svg><svg viewBox="0 0 12 12"><path d="M1 4h2l3-2v8L3 8H1zM8 4v4M10 3v6" fill="none" stroke="#999"/></svg><svg><use href="#i-search"/></svg><span>100%</span></div>
  <div class="widget">
    <div class="net"><span><i class="r">↑</i>0K/s</span><span><i class="g">↓</i>0K/s</span></div>
    <div class="ball">41<small>分</small></div>
  </div>
</aside>
</div>

<footer class="taskbar">
  <button class="orb" aria-label="开始"><svg viewBox="0 0 22 22"><circle cx="11" cy="11" r="10.500" fill="#235c8c" stroke="#7db4d8"/><path d="M5 7q3-2 5-1v5q-2-1-5 0z" fill="#ef6b35"/><path d="M11 6q3 1 6-1v5q-3 2-6 1z" fill="#9dcf4a"/><path d="M5 12q3-1 5 0v5q-2-1-5 0z" fill="#5ab2ee"/><path d="M11 12q3 1 6-1v5q-3 2-6 1z" fill="#fbd04c"/></svg></button>
  <button class="tb" aria-label="浏览器"><svg viewBox="0 0 20 20"><path d="M9 9C1 10-1 3 5 2c4 0 5 3 4 7z" fill="#76c043"/><path d="M10 9c0-8 6-9 8-5 2 3-3 6-8 5z" fill="#3e8ede"/><path d="M11 10c8-1 10 6 5 8-4 1-6-3-5-8z" fill="#e5432f"/><path d="M9 10c1 8-5 10-8 6-1-4 3-7 8-6z" fill="#f9c31f"/></svg></button>
  <button class="tb act" aria-label="资源管理器"><svg viewBox="0 0 20 20"><path d="M1 4h6l1-2h10v16H1z" fill="#ecd27c"/><path d="M3 6h14v9H3z" fill="#fff4c0"/><path d="M3 3h2v3H3z" fill="#3a3"/><path d="M10 3h3v3h-3z" fill="#d44"/><path d="M4 19v-6h13v6h-3v-3H7v3z" fill="#9cd0ee"/></svg></button>
  <button class="tb" aria-label="播放器"><svg viewBox="0 0 20 20"><path d="M6 3h12v13H6z" fill="#78b8dc"/><circle cx="9" cy="10" r="7" fill="#f07c22"/><path d="M7 6v8l6-4z" fill="#fff"/></svg></button>
  <button class="tb" aria-label="网盘"><svg viewBox="0 0 20 20"><rect width="20" height="20" rx="4" fill="#fff"/><circle cx="10" cy="7" r="3" fill="none" stroke="#2f74e4" stroke-width="1.800"/><circle cx="6" cy="12" r="3" fill="none" stroke="#2453c8" stroke-width="1.800"/><circle cx="14" cy="12" r="3" fill="none" stroke="#2453c8" stroke-width="1.800"/><path d="M8 19h5" stroke="#d33" stroke-width="2"/></svg></button>
  <button class="tb act" aria-label="安全浏览器"><svg viewBox="0 0 20 20"><circle cx="10" cy="10" r="8" fill="#62bb35"/><path d="M5 10h10c0-7-10-7-10 0s8 6 10 3" fill="none" stroke="#fff" stroke-width="2"/><path d="M1 15C4 5 15 0 19 3" fill="none" stroke="#d8e85c" stroke-width="1.500"/></svg></button>
  <button class="tb act lit" aria-label="Creo"><svg viewBox="0 0 20 20"><path d="M1 1h18v18H1z" fill="#8fbf3c"/><path d="M2 2h15v15H2z" fill="#d7ecb4"/><path d="M4 3h5v9h7v4H4z" fill="#1f6da4"/><path d="M9 4h7v8H9z" fill="#b7d84a"/></svg></button>
  <button class="tb act" aria-label="画图"><svg viewBox="0 0 20 20"><path d="M2 12c0-5 6-8 11-6 4 2 2 5 0 6s1 4-3 5c-4 0-8-1-8-5z" fill="#dce8f2" stroke="#8ba4b8"/><circle cx="6" cy="10" r="1.500" fill="#d33"/><circle cx="10" cy="8" r="1.300" fill="#3a3"/><circle cx="6" cy="14" r="1.300" fill="#36c"/><path d="M9 17l8-15" stroke="#c9742c" stroke-width="2.200"/></svg></button>
  <div class="tray">
    <span class="ch">CH</span>
    <span><svg viewBox="0 0 12 12"><rect x="1" y="1" width="10" height="10" rx="1" fill="#e8452c"/><path d="M9 3C5 2 3 5 6 6s3 4-3 3" fill="none" stroke="#fff" stroke-width="1.600"/></svg></span>
    <span><b class="q">?</b></span>
    <span><svg viewBox="0 0 12 12"><path d="M4 1h5v3H4zM3 3h4v2" fill="none" stroke="#dde"/><path d="M4 8h5l-2.500 3z" fill="#fff"/></svg></span>
    <span><svg viewBox="0 0 12 12"><path d="M3 8l3-3 3 3z" fill="#fff"/></svg></span>
    <span><svg viewBox="0 0 12 12"><circle cx="6" cy="6" r="5" fill="#62bb35"/><path d="M3.500 6h5c0-4-5-4-5 0s4 3 5 2" fill="none" stroke="#fff" stroke-width="1.300"/></svg></span>
    <span><svg viewBox="0 0 12 12"><path d="M1 9q2-1 2-4c0-5 6-5 6 0q0 3 2 4zM5 10h2v1H5z" fill="#fff"/></svg></span>
    <span><svg viewBox="0 0 12 12"><path d="M1 9h1v2H1zM3.500 8h1v3h-1zM6 6h1v5H6zM8.500 4h1v7h-1zM11 2h1v9h-1z" fill="#fff" stroke="#fff" stroke-width=".5"/></svg></span>
    <span><svg viewBox="0 0 12 12"><path d="M2 1h7v10H2z" fill="#ddd"/><path d="M6 5h5L9 11H7z" fill="#fff" stroke="#456"/></svg></span>
    <span><svg viewBox="0 0 12 12"><path d="M6 0l6 6-6 6-6-6z" fill="#5cb52e"/><circle cx="5" cy="5" r="3.500" fill="#f6d820"/><path d="M6 8h5M8.500 5.500v5" stroke="#fff" stroke-width="1.500"/></svg></span>
    <span><svg viewBox="0 0 12 12"><path d="M0 1h12v10H0z" fill="#1b2318"/><path d="M1 6c2-4 8-4 10 0-3 4-8 3-10 0z" fill="none" stroke="#76b900" stroke-width="1.500"/><circle cx="6" cy="6" r="1.500" fill="#76b900"/></svg></span>
    <span><svg viewBox="0 0 12 12"><path d="M1 1v11M2 2h6v5H2z" fill="#fff" stroke="#fff"/><path d="M5 5h6v6H5z" fill="#d8222a"/><path d="M6.500 6.500l3 3M9.500 6.500l-3 3" stroke="#fff"/></svg></span>
    <span><svg viewBox="0 0 12 12"><path d="M1 4h2l4-3v10L3 8H1z" fill="#fff"/><path d="M9 4q2 2 0 4" fill="none" stroke="#fff"/></svg></span>
    <time>7:19<br>2018/6/11</time>
    <button class="showdesk" aria-label="显示桌面"></button>
  </div>
</footer>

<svg class="mark" viewBox="0 0 184 92">
  <g class="mark-shape"><ellipse cx="68" cy="26" rx="7" ry="9"/><ellipse cx="81" cy="13" rx="7" ry="9"/><ellipse cx="97" cy="14" rx="7" ry="9"/><ellipse cx="107" cy="29" rx="7" ry="9"/><path d="M87 28c9 0 11 8 15 12 9 7 9 20-1 21-5 0-9-1-14-1s-9 1-14 1c-10-1-10-14-1-21 4-4 6-12 15-12z"/></g>
  <g class="mark-text"><text x="0" y="60" font-size="40">Bai</text><text x="73" y="55" font-size="24">du</text><text x="115" y="57" font-size="30">经验</text></g>
  <text class="mark-url" x="3" y="82">jingyan.baidu.com</text>
</svg>
</body>
</html>
```
FILE: styles.css
```css
* { box-sizing: border-box; }
body {
  margin: 0;
  height: 100vh;
  display: flex;
  flex-direction: column;
  position: relative;
  overflow: hidden;
  font: 8px/10px "Noto Sans", "Noto Sans CJK SC", sans-serif;
  color: #444;
  background: #fcfcfc;
}
button {
  font: inherit;
  color: inherit;
  background: none;
  border: 0;
  padding: 0;
  display: flex;
  align-items: center;
  white-space: nowrap;
}
svg { width: 11px; height: 11px; flex: none; display: block; }
.defs { position: absolute; width: 0; height: 0; }
.dn {
  display: inline-block;
  border: 2px solid transparent;
  border-top: 3px solid #444;
  border-bottom: 0;
  margin-left: 3px;
  flex: none;
}
.dn.pale { border-top-color: #aaa; }

.desk { flex: 1; display: flex; min-height: 0; }
.creo {
  flex: 1;
  min-width: 0;
  display: flex;
  flex-direction: column;
  border: 3px solid #7b7d80;
  background: #fcfcfc;
}

/* title and tabs */
.titlebar { display: flex; align-items: center; height: 20px; padding: 0 6px; flex: none; }
.logo { width: 12px; height: 12px; }
.titlebar h1 { flex: 1; margin: 0; text-align: center; font: 500 9px/12px Roboto, "Noto Sans CJK SC", sans-serif; color: #222; }
.winbtns { display: flex; gap: 7px; }
.winbtns svg { width: 10px; height: 10px; }
.tabs { display: flex; align-items: flex-end; height: 17px; padding: 0 2px; font-size: 9px; color: #666; font-weight: 500; flex: none; }
.tabs button { justify-content: center; font-weight: 500; }
.filetab { width: 35px; height: 13px; background: #edeff2; border: 1px solid #d5d8db; border-bottom: 0; }
.tabset { display: flex; height: 13px; margin: 0 5px; background: #edeff2; border: 1px solid #d5d8db; border-bottom: 0; }
.tabset button { width: 33px; border-right: 1px solid #e2e4e7; }
.tabset .wide { width: 51px; }
.tabs .tab-on { width: 34px; height: 17px; background: #fcfcfc; border: 1px solid #d5d8db; border-bottom: 0; font-style: italic; font-weight: 700; color: #333; }
.help { margin-left: auto; display: flex; align-items: center; gap: 4px; height: 17px; padding: 4px 2px 0 0; }
.qm { width: 10px; height: 10px; border-radius: 50%; background: #333; color: #fff; text-align: center; font-weight: 700; }

/* ribbon */
.ribbon { display: flex; margin: 0 2px; height: 62px; border: 1px solid #d5d8db; flex: none; }
.grp { display: flex; flex-direction: column; border-right: 1px solid #dcdfe2; }
.body { flex: 1; display: grid; padding-left: 4px; }
.cap { height: 13px; background: #eceef1; border-top: 1px solid #e2e4e7; display: flex; align-items: center; justify-content: center; }
.col { display: grid; grid-template-rows: repeat(3, 1fr); padding-top: 1px; }
.it { gap: 1px; }
.it .dn { margin-left: 4px; }
.off { color: #aaa; }
.big { flex-direction: column; padding-top: 2px; line-height: 9px; text-align: center; }
.big svg { width: 20px; height: 22px; margin-bottom: 3px; }
.g-set { width: 52px; }
.g-get { width: 38px; }
.g-op { width: 44px; }
.g-op .body { grid-template-columns: 13px 25px; }
.sel { background: linear-gradient(#eef0f2, #dfe2e5 50%, #f0f1f3 51%); border: 1px solid #c9ccd0; border-top: 2px solid #999; margin-top: 2px; }
.sel .dn { margin: 2px 0 0; }
.g-dat { width: 45px; }
.g-sk { width: 266px; }
.g-sk .body { grid-template-columns: 32px 42px 41px 42px 32px 49px 20px; padding-left: 3px; }
.g-ed { width: 99px; }
.g-ed .body { grid-template-columns: 32px 1fr; }
.g-con { width: 102px; }
.g-con .body { grid-template-columns: 32px 32px 1fr; }
.g-dim { width: 62px; }
.g-dim .body { grid-template-columns: 25px 1fr; }
.g-chk { width: 45px; }
.g-chk .body { grid-template-columns: 22px 16px; }
.press .it { border: 1px solid #c9ccd0; background: #eef0f2; justify-content: center; }
.g-cl { width: 54px; }
.g-cl .body { grid-template-columns: 1fr 1fr; padding-left: 0; }
.g-cl svg { width: 17px; }
.rest { flex: 1; border-right: 0; }

.quick { display: flex; align-items: center; height: 15px; padding: 0 6px; gap: 4px; flex: none; }
.more { border-left: 1px solid #ccc; height: 13px; padding-left: 3px; }

/* workspace */
.work { flex: 1; display: flex; min-height: 0; }
.side { width: 249px; display: flex; flex-direction: column; padding: 8px 0 8px 2px; }
.sidetabs { display: flex; height: 18px; flex: none; }
.sidetabs button { width: 19px; justify-content: center; background: #eceef1; border: 1px solid #d5d8db; border-width: 1px 1px 0 0; }
.sidetabs .on { background: #fcfcfc; border-left-width: 1px; }
.panel { flex: 1; display: flex; flex-direction: column; min-height: 0; border: 1px solid #c9cccf; border-width: 1px 2px 2px 1px; }
.phead { display: flex; align-items: center; height: 18px; padding-left: 12px; border-bottom: 1px solid #d5d8db; gap: 8px; flex: none; }
.phead b { flex: 1; color: #222; }
.phead .dn { margin: 0 1px 0 7px; }
.phead svg { width: 12px; height: 12px; }
.treewrap { flex: 1; display: flex; min-height: 0; }
.treeclip { flex: 1; display: flex; align-items: flex-end; overflow: hidden; }
.tree { list-style: none; margin: 0; padding: 0 0 0 6px; height: 350px; display: grid; grid-auto-rows: 1fr; flex: none; }
.tree li { display: flex; align-items: center; gap: 1px; white-space: nowrap; }
.tree li svg { width: 10px; height: 10px; }
.tree li::before { content: ""; border: 3px solid transparent; border-left: 4px solid #777; border-right: 0; margin-right: 4px; visibility: hidden; }
.tree .ex::before { visibility: visible; }
.boxed { border: 1px solid #777; line-height: 10px; }
.sbar { width: 11px; display: flex; flex-direction: column; background: #eceef0; border-left: 1px solid #d5d8db; }
.sbar button { height: 11px; justify-content: center; background: #f4f5f6; }
.sbar .dn { margin: 0; }
.up::before { content: ""; border: 2px solid transparent; border-bottom: 3px solid #555; border-top: 0; }
.track { flex: 1; display: flex; flex-direction: column; justify-content: flex-end; }
.thumb { height: 31%; margin-right: 1px; border: 1px solid #c5c8cb; background: repeating-linear-gradient(#aaa 0 1px, transparent 1px 2px) center / 4px 7px no-repeat, linear-gradient(90deg, #fff, #e8e9eb); }

.view { flex: 1; position: relative; min-width: 0; }
.model { width: 100%; height: 100%; }
.dimtext { font: 7px "DejaVu Sans", sans-serif; fill: #2222cc; }
.vtools { position: absolute; top: 4px; left: 50%; transform: translateX(-50%); display: flex; height: 17px; padding: 0 3px; background: #f0f1f2; border: 1px solid #ddd; }
.vtools button { width: 17px; justify-content: center; background: #fff; border-right: 1px solid #e0e0e0; }
.vtools .on { background: #e6e8ea; border: 1px solid #bbb; }

.status { display: flex; align-items: center; height: 20px; padding: 0 12px 0 3px; gap: 2px; background: #eff0f2; border-top: 1px solid #aaa; flex: none; }
.sq { width: 15px; height: 15px; justify-content: center; border: 1px solid #ddd; background: #f6f7f8; }
.sq.on { background: #dcdfe2; border-color: #aaa; }
.msg { flex: 1; display: flex; align-items: center; gap: 3px; margin-left: 7px; font-size: 7px; }
.msg i { width: 4px; height: 4px; border-radius: 50%; background: #11c; }
.dots { display: flex; align-items: center; gap: 1px; border: 1px solid #dde; border-width: 0 1px; height: 15px; padding: 0 2px; }
.dots i { width: 3px; height: 3px; border-radius: 50%; background: #ccc; }
.dots i:first-child { width: 6px; height: 6px; background: #aaa; }
.find { width: 25px; height: 14px; justify-content: center; border: 1px solid #d0d2d5; background: #f4f5f6; }
.filter { position: relative; width: 112px; margin-left: 60px; }
.filter select { appearance: none; width: 100%; height: 13px; padding: 0 4px; font: inherit; line-height: 11px; color: #333; background: #f8f9fa; border: 1px solid #ccc; border-radius: 0; }
.filter .dn { position: absolute; right: 4px; top: 5px; }

/* browser at the right */
.browser { width: 92px; display: flex; flex-direction: column; position: relative; background: #ececec; }
.btop { height: 18px; display: flex; align-items: center; justify-content: space-between; padding: 0 7px 0 24px; background: #e6e6e6; }
.bnav { height: 21px; display: flex; align-items: center; justify-content: space-between; padding: 0 6px 0 2px; background: #fcfcfc; color: #555; }
.bnav .dn { margin: 0; }
.bmarks { height: 20px; display: flex; align-items: center; gap: 2px; background: #fafafa; white-space: nowrap; }
.bmarks a { color: #555; text-decoration: none; }
.bmarks a:first-of-type { margin-right: 11px; }
.page { flex: 1; display: flex; min-height: 0; }
.sky { flex: 1; height: 150px; }
.pscroll { width: 10px; background: #f2f2f2; padding: 71px 1px 0; }
.pscroll i { display: block; height: 221px; background: #bdbdbd; }
.bfoot { height: 14px; display: flex; align-items: center; justify-content: flex-end; gap: 10px; padding-right: 3px; background: #fafafa; color: #888; }
.bfoot svg { width: 9px; height: 9px; }
.bfoot span { margin-left: -5px; }
.widget { position: absolute; top: 50px; right: 0; width: 88px; height: 46px; }
.net { position: absolute; top: 9px; right: 0; width: 56px; height: 27px; padding: 3px 12px 0 17px; border-radius: 4px 14px 14px 4px; background: linear-gradient(#4b4f56, #25282e); color: #ddd; font-size: 7px; border-top: 1px solid #b08d3a; }
.net span { display: flex; justify-content: space-between; }
.net i { font-style: normal; font-weight: 700; }
.net .r { color: #ff5a2a; }
.net .g { color: #6fd22a; }
.ball { position: absolute; left: 3px; top: 1px; width: 44px; height: 44px; border-radius: 50%; border: 3px solid #9b7a36; outline: 1px solid #4c3b1c; outline-offset: -1px; background: radial-gradient(circle at 50% 12%, #d8d4f4 0, transparent 18%), linear-gradient(#4a4486 0 55%, #4d22b4 56% 75%, #24105e); color: #eee; display: flex; align-items: center; justify-content: center; font-size: 14px; }
.ball small { font-size: 7px; padding-top: 5px; }

/* taskbar */
.taskbar { height: 25px; flex: none; display: flex; align-items: center; padding-left: 6px; background: linear-gradient(105deg, transparent 67%, #5fa6de 68% 69%, transparent 71%), linear-gradient(90deg, #1c5a88, #236d9e 7%, #3d9ccf 12%, #45a5d8 40%, #2c80c4 52%, #1e6bb4 66%, #174f8c 74%, #123f74); border-top: 1px solid #123c5c; }
.orb svg { width: 22px; height: 22px; }
.tb { width: 36px; height: 24px; justify-content: center; margin-left: 3px; border: 1px solid transparent; }
.tb svg { width: 20px; height: 20px; }
.orb + .tb { margin-left: 7px; }
.act { border-color: #a5d2e8; border-radius: 2px; background: linear-gradient(#9fcde6, #5ba8d0); }
.lit { background: linear-gradient(#eef8fc, #a4d0e4); }
.tray { margin-left: auto; display: flex; align-items: center; align-self: stretch; color: #fff; }
.tray span { width: 15px; display: flex; justify-content: center; }
.tray span:nth-child(-n+4) { width: 14px; }
.tray svg { width: 10px; height: 10px; }
.ch { font-family: "Liberation Mono", monospace; }
.q { width: 10px; height: 10px; border-radius: 50%; background: #1d2fae; border: 1px solid #c5cdf2; line-height: 8px; text-align: center; }
.tray time { width: 50px; text-align: center; line-height: 11px; }
.showdesk { width: 8px; align-self: stretch; border: 1px solid #5c83a8; background: #2a5580; }

/* watermark */
.mark { position: absolute; right: 49px; bottom: 19px; width: 184px; height: 92px; pointer-events: none; }
.mark-shape { fill: #fdfdfd; fill-opacity: .8; stroke: #d6d6d6; stroke-width: 2; }
.mark-text { font-family: "Liberation Sans", "Noto Sans CJK SC", sans-serif; font-weight: 700; fill: #fdfdfd; stroke: #d6d6d6; stroke-width: 2; paint-order: stroke; }
.mark-url { font: 22px "Liberation Sans", sans-serif; fill: #fff; fill-opacity: .75; stroke: #c4c4c4; stroke-opacity: .5; stroke-width: 1; paint-order: stroke; }
```
